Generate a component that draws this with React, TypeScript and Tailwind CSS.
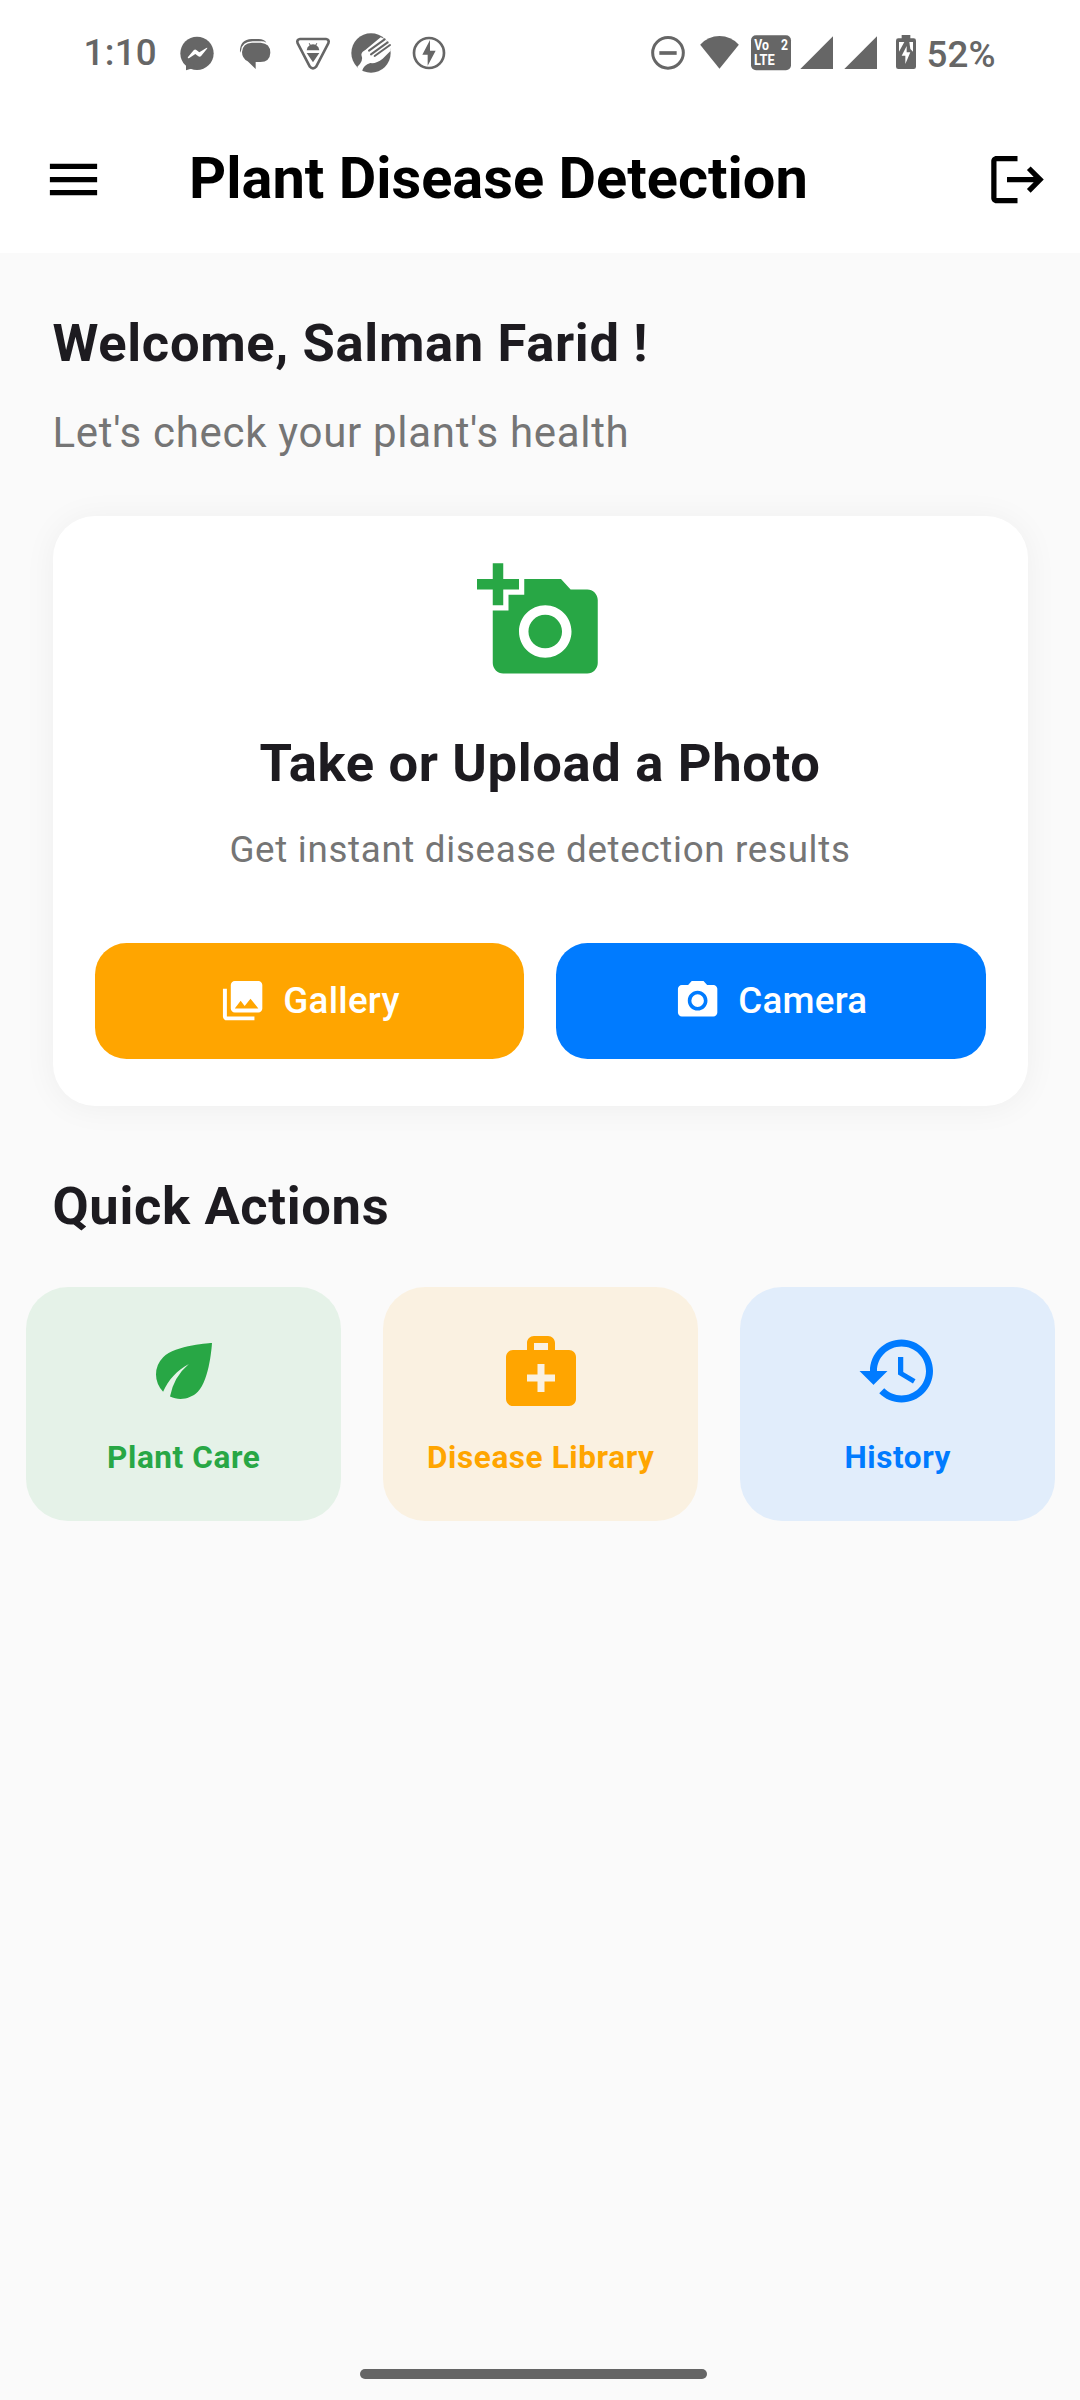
import type { ReactNode } from 'react';

type IconProps = { className: string };

function Glyph({ className, d }: IconProps & { d: string }) {
  return (
    <svg viewBox="0 0 24 24" fill="currentColor" className={className}>
      <path d={d} />
    </svg>
  );
}

const icons = {
  menu: 'M3 18h18v-2H3v2zm0-5h18v-2H3v2zm0-7v2h18V6H3z',
  logout:
    'M17 7l-1.41 1.41L18.17 11H8v2h10.17l-2.58 2.58L17 17l5-5zM4 5h8V3H4c-1.1 0-2 .9-2 2v14c0 1.1.9 2 2 2h8v-2H4V5z',
  addPhoto:
    'M3 4V1h2v3h3v2H5v3H3V6H0V4h3zm3 6V7h3V4h7l1.83 2H21c1.1 0 2 .9 2 2v12c0 1.1-.9 2-2 2H5c-1.1 0-2-.9-2-2V10h3zm7 9c2.76 0 5-2.24 5-5s-2.24-5-5-5-5 2.24-5 5 2.24 5 5 5zm-3.2-5c0 1.77 1.43 3.2 3.2 3.2s3.2-1.43 3.2-3.2-1.43-3.2-3.2-3.2-3.2 1.43-3.2 3.2z',
  gallery:
    'M22 16V4c0-1.1-.9-2-2-2H8c-1.1 0-2 .9-2 2v12c0 1.1.9 2 2 2h12c1.1 0 2-.9 2-2zm-11-4l2.03 2.71L16 11l4 5H8l3-4zM2 6v14c0 1.1.9 2 2 2h14v-2H4V6H2z',
  camera:
    'M12 8.8a3.2 3.2 0 1 0 0 6.4 3.2 3.2 0 1 0 0-6.4zM9 2L7.17 4H4c-1.1 0-2 .9-2 2v12c0 1.1.9 2 2 2h16c1.1 0 2-.9 2-2V6c0-1.1-.9-2-2-2h-3.17L15 2H9zm3 15c-2.76 0-5-2.24-5-5s2.24-5 5-5 5 2.24 5 5-2.24 5-5 5z',
  leaf: 'M6.05 8.05a7.001 7.001 0 0 0-.02 9.88c1.47-3.4 4.09-6.24 7.36-7.93A15.952 15.952 0 0 0 8 19.32c2.6 1.23 5.8.78 7.95-1.37C19.43 14.47 20 4 20 4S9.53 4.57 6.05 8.05z',
  medical:
    'M20 6h-4V4c0-1.1-.9-2-2-2h-4c-1.1 0-2 .9-2 2v2H4c-1.1 0-2 .9-2 2v12c0 1.1.9 2 2 2h16c1.1 0 2-.9 2-2V8c0-1.1-.9-2-2-2zM10 4h4v2h-4V4zm6 11h-3v3h-2v-3H8v-2h3v-3h2v3h3v2z',
  history:
    'M13 3c-4.97 0-9 4.03-9 9H1l3.89 3.89.07.14L9 12H6c0-3.87 3.13-7 7-7s7 3.13 7 7-3.13 7-7 7c-1.93 0-3.68-.79-4.94-2.06l-1.42 1.42C8.27 19.99 10.51 21 13 21c4.97 0 9-4.03 9-9s-4.03-9-9-9zm-1 5v5l4.28 2.54.72-1.21-3.5-2.08V8H12z',
};

function StatusBar() {
  return (
    <div className="flex h-[106px] items-start pt-8 text-[#666666]">
      <span className="ml-[83.5px] w-[95.5px] text-[36.75px] leading-[42px] font-medium tracking-[0.3px]">1:10</span>

      {/* Messenger */}
      <svg viewBox="357 36 108 126" className="h-[42px] w-9" fill="currentColor">
        <circle cx="411" cy="100" r="50" />
        <path d="M378 118v33l30-9z" />
        <path d="M384 111l17-20q4-4 8-1l9 7 21-13q5-2 2 2l-17 21q-4 5-9 2l-9-7-18 12q-7 2-4-3z" fill="#fff" />
      </svg>
      {/* Chat bubbles */}
      <svg viewBox="534 36 102 126" className="ml-[23px] h-[42px] w-[34px]" fill="currentColor">
        <path d="M540 98q-2-40 35-41h21q17 0 23 11q-6-4-15-4h-26q-32 1-35 28z" />
        <path d="M576 68h26q29 2 29 30q-1 27-30 28h-14v21l-24-23q-17-9-17-28q2-27 30-28z" />
      </svg>
      {/* Shield triangle */}
      <svg viewBox="702 36 114 126" className="ml-[22px] h-[42px] w-[38px]" fill="currentColor">
        <path
          d="M720 57h78q11 2 7 13l-36 69q-10 12-20 0l-36-69q-4-11 7-13z"
          fill="none"
          stroke="currentColor"
          strokeWidth="8"
        />
        <path d="M740 91q1-11 9-15l-3-6 2-1 4 5q7-2 14 0l4-5 2 1-3 6q8 4 9 15zM740 99h38l-19 28z" />
      </svg>
      {/* Feathered disc */}
      <svg viewBox="870 36 126 126" className="ml-[18px] h-[42px] w-[42px]">
        <circle cx="933" cy="99" r="59" fill="currentColor" />
        <path
          d="M892 140q20-18 12-36q1-9 12-14l46-38l14 6l14 20l2 14l-24 24q-20 16-37 13q-20 6-25 24q-8 0-14-13z"
          fill="#fff"
        />
        <path
          d="M927 92l47-34M933 103l50-36M944 108l46-33"
          stroke="currentColor"
          strokeWidth="6"
          strokeLinecap="round"
        />
      </svg>
      {/* Bolt in circle */}
      <svg viewBox="1056 36 102 126" className="ml-5 h-[42px] w-[34px]" fill="currentColor">
        <circle cx="1107" cy="99" r="45" fill="none" stroke="currentColor" strokeWidth="8" />
        <path d="M1110 60l-23 44h16v33l24-45h-17z" />
      </svg>

      {/* Do not disturb */}
      <svg viewBox="60 36 108 126" className="ml-[204px] h-[42px] w-9" fill="none" stroke="currentColor">
        <circle cx="114" cy="98.500" r="46" strokeWidth="9" />
        <path d="M88 99h52" strokeWidth="11" />
      </svg>
      {/* Wi-Fi */}
      <svg viewBox="207 36 123 126" className="ml-[13px] h-[42px] w-[41px]" fill="currentColor">
        <path d="M268.500 146l-58-72q24-26 58-26t58 26z" />
      </svg>
      {/* VoLTE 2 */}
      <svg viewBox="360 36 126 126" className="ml-[10px] h-[42px] w-[42px]">
        <rect x="363" y="46" width="120" height="105" rx="15" fill="currentColor" />
        <g fill="#fff" fontFamily="Roboto" fontWeight="700" fontSize="43">
          <text x="373" y="91" textLength="44" lengthAdjust="spacingAndGlyphs">Vo</text>
          <text x="453" y="91" textLength="21" lengthAdjust="spacingAndGlyphs">2</text>
          <text x="372" y="136" textLength="62" lengthAdjust="spacingAndGlyphs">LTE</text>
        </g>
      </svg>
      {/* Signal bars */}
      <svg viewBox="510 36 102 126" className="ml-2 h-[42px] w-[34px]" fill="currentColor">
        <path d="M511 147h98V49z" />
      </svg>
      <svg viewBox="642 36 102 126" className="ml-[10px] h-[42px] w-[34px]" fill="currentColor">
        <path d="M643 147h98V49z" />
      </svg>
      {/* Battery, charging */}
      <svg viewBox="795 36 66 126" className="ml-[17px] h-[42px] w-[22px]">
        <path d="M815 45h26v10h10q7 0 7 7v78q0 7-7 7h-46q-7 0-7-7V62q0-7 7-7h10z" fill="currentColor" />
        <path d="M807 66h16l-16 29zM838 66h11v29l-8-8zM830 78l-15 29h11v25l15-35h-11z" fill="#fff" />
      </svg>
      <span className="mt-[1.500px] ml-[9.500px] text-[36.75px] leading-[42px] font-medium tracking-[0.1px]">52%</span>
    </div>
  );
}

function PhotoButton({ className, icon, children }: { className: string; icon: string; children: ReactNode }) {
  return (
    <button className={`flex h-[115.5px] flex-1 items-center justify-center gap-[17px] rounded-[31.5px] text-white ${className}`}>
      <Glyph d={icon} className="size-[47.25px]" />
      <span className="mt-px text-[36.75px] leading-[44px] font-medium tracking-[0.26px]">{children}</span>
    </button>
  );
}

function ActionTile({ className, icon, children }: { className: string; icon: string; children: ReactNode }) {
  return (
    <button className={`flex h-[234px] w-[315px] shrink-0 flex-col items-center rounded-[42px] pt-[42px] ${className}`}>
      <Glyph d={icon} className="size-[84px]" />
      <span className="mt-[26px] text-[31.5px] leading-[38px] font-bold tracking-[0.6px] whitespace-nowrap">
        {children}
      </span>
    </button>
  );
}

export default function App() {
  return (
    <div className="flex h-[2400px] w-[1080px] flex-col overflow-hidden bg-[#fafafa] font-['Roboto',sans-serif] text-[#1d1b20]">
      <header className="h-[253px] shrink-0 bg-white">
        <StatusBar />
        <div className="flex h-[147px] items-center pr-[31px] pl-[42px] text-black">
          <Glyph d={icons.menu} className="size-[63px]" />
          <h1 className="-mt-[4px] ml-[84px] text-[57.75px] leading-[68px] font-bold">Plant Disease Detection</h1>
          <Glyph d={icons.logout} className="ml-auto size-[63px]" />
        </div>
      </header>

      <main className="flex flex-col px-[52.5px] pt-[59px]">
        <h2 className="text-[52.5px] leading-[62px] font-bold tracking-[0.66px]">Welcome, Salman Farid !</h2>
        <p className="mt-[34px] text-[42px] leading-[50px] tracking-[0.69px] text-[#757575]">
          Let's check your plant's health
        </p>

        <section className="mt-[57.5px] flex h-[590px] flex-col items-center rounded-[42px] bg-white px-[42px] pt-[42.500px] shadow-[0_2px_33px_rgba(0,0,0,0.05)]">
          <Glyph d={icons.addPhoto} className="size-[126px] text-[#28a745]" />
          <h3 className="mt-[48px] text-[52.5px] leading-[62px] font-bold tracking-[0.66px]">
            Take or Upload a Photo
          </h3>
          <p className="mt-[34px] text-[36.75px] leading-[44px] tracking-[0.68px] text-[#757575]">
            Get instant disease detection results
          </p>
          <div className="mt-[71px] flex w-full gap-[31.5px]">
            <PhotoButton icon={icons.gallery} className="bg-[#ffa500]">Gallery</PhotoButton>
            <PhotoButton icon={icons.camera} className="bg-[#007bff]">Camera</PhotoButton>
          </div>
        </section>

        <h2 className="mt-[69.5px] text-[52.5px] leading-[62px] font-bold tracking-[0.66px]">Quick Actions</h2>
        <div className="-mx-[26.25px] mt-[49.500px] flex gap-[42px]">
          <ActionTile icon={icons.leaf} className="bg-[#e5f2e8] text-[#28a745]">Plant Care</ActionTile>
          <ActionTile icon={icons.medical} className="bg-[#faf1e1] text-[#ffa500]">Disease Library</ActionTile>
          <ActionTile icon={icons.history} className="bg-[#e1edfb] text-[#007bff]">History</ActionTile>
        </div>
      </main>

      {/* Gesture navigation handle */}
      <div className="mt-auto mb-[21px] ml-[360px] h-[10.5px] w-[347px] shrink-0 rounded-full bg-[#656565]" />
    </div>
  );
}
